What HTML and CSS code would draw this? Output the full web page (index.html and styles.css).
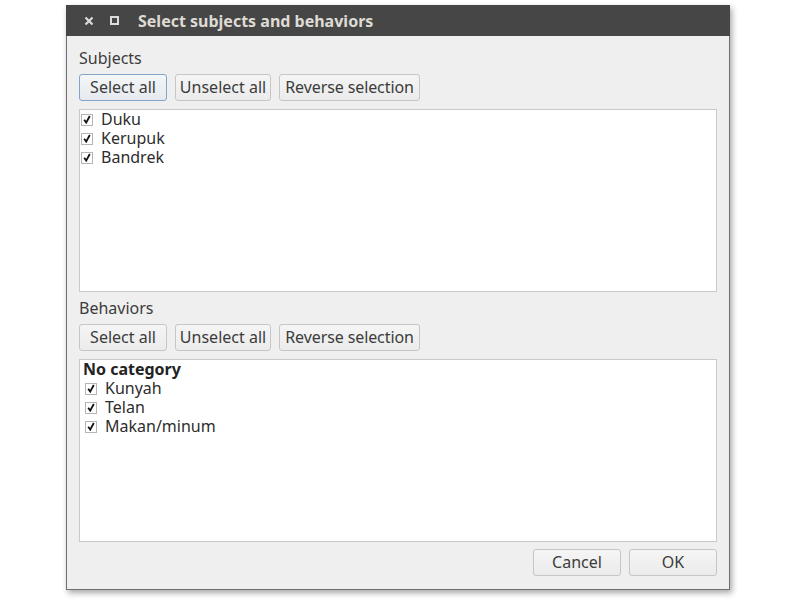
FILE: index.html
```html
<!DOCTYPE html>
<html>
<head>
<meta charset="utf-8">
<link rel="stylesheet" href="styles.css">
</head>
<body>
<div class="desktop">
  <div class="window">
    <div class="titlebar">
      <span class="tb-close">
        <svg width="10" height="10" viewBox="0 0 10 10"><path d="M1.5 1.5 L8.5 8.5 M8.5 1.5 L1.5 8.5" stroke="#dcdcdc" stroke-width="2.2" fill="none"/></svg>
      </span>
      <span class="tb-max">
        <svg width="9" height="9" viewBox="0 0 9 9"><rect x="1" y="1" width="7" height="7" stroke="#dcdcdc" stroke-width="2" fill="none"/></svg>
      </span>
      <span class="tb-title">Select subjects and behaviors</span>
    </div>
    <div class="content">
      <div class="label">Subjects</div>
      <div class="btnrow">
        <button class="btn b-sel focused">Select all</button>
        <button class="btn b-unsel">Unselect all</button>
        <button class="btn b-rev">Reverse selection</button>
      </div>
      <div class="listbox">
        <div class="item"><span class="cb"><svg width="8" height="9" viewBox="0 0 8 9"><path d="M1.2 4.8 L3.2 7.6 L6.8 1" stroke="#111" stroke-width="1.8" fill="none"/></svg></span><span class="txt">Duku</span></div>
        <div class="item"><span class="cb"><svg width="8" height="9" viewBox="0 0 8 9"><path d="M1.2 4.8 L3.2 7.6 L6.8 1" stroke="#111" stroke-width="1.8" fill="none"/></svg></span><span class="txt">Kerupuk</span></div>
        <div class="item"><span class="cb"><svg width="8" height="9" viewBox="0 0 8 9"><path d="M1.2 4.8 L3.2 7.6 L6.8 1" stroke="#111" stroke-width="1.8" fill="none"/></svg></span><span class="txt">Bandrek</span></div>
      </div>
      <div class="label label2">Behaviors</div>
      <div class="btnrow">
        <button class="btn b-sel">Select all</button>
        <button class="btn b-unsel">Unselect all</button>
        <button class="btn b-rev">Reverse selection</button>
      </div>
      <div class="listbox tree">
        <div class="cat">No category</div>
        <div class="item sub"><span class="cb"><svg width="8" height="9" viewBox="0 0 8 9"><path d="M1.2 4.8 L3.2 7.6 L6.8 1" stroke="#111" stroke-width="1.8" fill="none"/></svg></span><span class="txt">Kunyah</span></div>
        <div class="item sub"><span class="cb"><svg width="8" height="9" viewBox="0 0 8 9"><path d="M1.2 4.8 L3.2 7.6 L6.8 1" stroke="#111" stroke-width="1.8" fill="none"/></svg></span><span class="txt">Telan</span></div>
        <div class="item sub"><span class="cb"><svg width="8" height="9" viewBox="0 0 8 9"><path d="M1.2 4.8 L3.2 7.6 L6.8 1" stroke="#111" stroke-width="1.8" fill="none"/></svg></span><span class="txt">Makan/minum</span></div>
      </div>
      <div class="footer">
        <button class="btn wide">Cancel</button>
        <button class="btn wide">OK</button>
      </div>
    </div>
  </div>
</div>
</body>
</html>
```
FILE: styles.css
```css
html, body {
  margin: 0;
  padding: 0;
  background: #ffffff;
}
body {
  font-family: "Noto Sans", "Open Sans", sans-serif;
  font-size: 16px;
  color: #3c3c3c;
}
.desktop {
  width: 800px;
  height: 600px;
  padding: 5px 0 0 66px;
  box-sizing: border-box;
}
.window {
  width: 664px;
  height: 585px;
  background: #efefef;
  border-left: 1px solid #6e6e6e;
  border-right: 1px solid #6e6e6e;
  border-bottom: 1px solid #6e6e6e;
  box-sizing: border-box;
  box-shadow: 2px 3px 6px rgba(0,0,0,0.35);
  display: flex;
  flex-direction: column;
}
.titlebar {
  height: 31px;
  background: #464646;
  display: flex;
  align-items: center;
  flex: none;
  margin: 0 -1px;
}
.tb-close {
  display: flex;
  margin-left: 18px;
}
.tb-max {
  display: flex;
  margin-left: 16px;
}
.tb-title {
  margin-left: 19px;
  color: #dedbd4;
  font-weight: bold;
  font-size: 16px;
}
.content {
  flex: 1;
  display: flex;
  flex-direction: column;
  padding: 12px 12px 0 12px;
}
.label {
  height: 20px;
  line-height: 20px;
  font-size: 16px;
  color: #3c3c3c;
}
.label2 {
  margin-top: 6px;
}
.btnrow {
  display: flex;
  gap: 8px;
  margin-top: 6px;
}
.btn {
  height: 27px;
  padding: 0;
  font-family: "Noto Sans", "Open Sans", sans-serif;
  font-size: 16px;
  line-height: 25px;
  color: #3c3c3c;
  background: linear-gradient(#f5f5f5, #ebebeb);
  border: 1px solid #c6c6c6;
  border-radius: 3px;
  box-sizing: border-box;
  white-space: nowrap;
}
.b-sel { width: 88px; }
.b-unsel { width: 96px; }
.b-rev { width: 141px; letter-spacing: -0.1px; }
.btn.focused {
  border-color: #82a6c8;
  background: linear-gradient(#f4f6f8, #e6eaee);
}
.listbox {
  margin-top: 8px;
  height: 183px;
  background: #ffffff;
  border: 1px solid #c9c9c9;
  box-sizing: border-box;
  padding: 0 0 0 1px;
  flex: none;
}
.item {
  height: 19px;
  line-height: 19px;
  display: flex;
  align-items: center;
  font-size: 16px;
  color: #2d2d2d;
}
.txt {
  line-height: 19px;
}
.cb {
  width: 12px;
  height: 12px;
  border: 1px solid #b5b5b5;
  box-sizing: border-box;
  background: #fff;
  display: flex;
  align-items: center;
  justify-content: center;
  margin-right: 8px;
  flex: none;
}
.tree {
  padding-left: 3px;
}
.cat {
  height: 19px;
  line-height: 19px;
  font-weight: bold;
  font-size: 16px;
  color: #222;
}
.item.sub {
  padding-left: 2px;
}
.footer {
  margin-top: 7px;
  display: flex;
  justify-content: flex-end;
  gap: 8px;
}
.btn.wide {
  width: 88px;
}
```
